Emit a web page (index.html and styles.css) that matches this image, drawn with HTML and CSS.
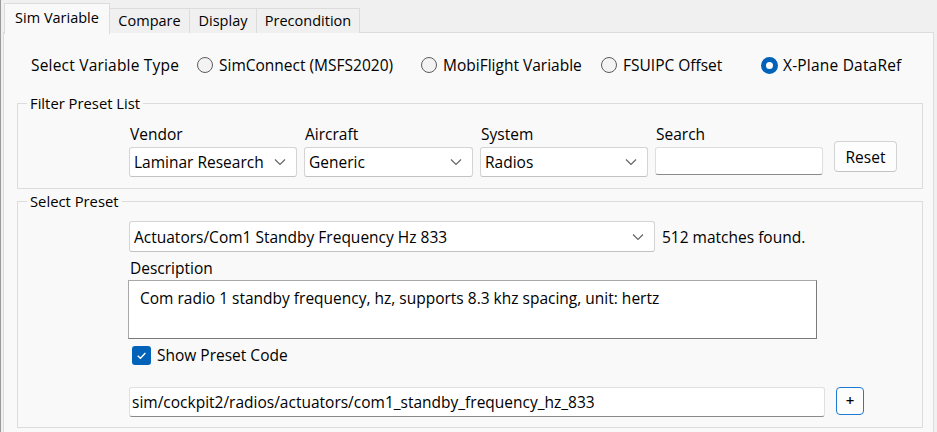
FILE: index.html
```html
<!DOCTYPE html>
<html>
<head>
<meta charset="utf-8">
<link rel="stylesheet" href="styles.css">
</head>
<body>
<div class="window">
  <div class="tabs">
    <div class="tab active t1">Sim Variable</div>
    <div class="tab t2">Compare</div>
    <div class="tab t3">Display</div>
    <div class="tab t4">Precondition</div>
  </div>
  <div class="panel">
    <div class="type-row">
      <span class="type-label">Select Variable Type</span>
      <label class="radio r1"><span class="dot"></span>SimConnect (MSFS2020)</label>
      <label class="radio r2"><span class="dot"></span>MobiFlight Variable</label>
      <label class="radio r3"><span class="dot"></span>FSUIPC Offset</label>
      <label class="radio sel"><span class="dot"></span>X-Plane DataRef</label>
    </div>

    <fieldset class="group filter">
      <legend>Filter Preset List</legend>
      <div class="filter-row">
        <div class="col">
          <div class="lbl">Vendor</div>
          <div class="combo w168"><span>Laminar Research</span><svg class="chev" viewBox="0 0 12 8"><path d="M1 1.5 L6 6.5 L11 1.5" /></svg></div>
        </div>
        <div class="col">
          <div class="lbl">Aircraft</div>
          <div class="combo w169"><span>Generic</span><svg class="chev" viewBox="0 0 12 8"><path d="M1 1.5 L6 6.5 L11 1.5" /></svg></div>
        </div>
        <div class="col">
          <div class="lbl">System</div>
          <div class="combo w168"><span>Radios</span><svg class="chev" viewBox="0 0 12 8"><path d="M1 1.5 L6 6.5 L11 1.5" /></svg></div>
        </div>
        <div class="col">
          <div class="lbl">Search</div>
          <div class="search"></div>
        </div>
        <div class="btn reset">Reset</div>
      </div>
    </fieldset>

    <fieldset class="group preset">
      <legend>Select Preset</legend>
      <div class="preset-body">
        <div class="preset-row">
          <div class="combo wide"><span>Actuators/Com1 Standby Frequency Hz 833</span><svg class="chev" viewBox="0 0 12 8"><path d="M1 1.5 L6 6.5 L11 1.5" /></svg></div>
          <span class="matches">512 matches found.</span>
        </div>
        <div class="lbl desc-lbl">Description</div>
        <div class="desc">Com radio 1 standby frequency, hz, supports 8.3 khz spacing, unit: hertz</div>
        <label class="check"><span class="box"><svg viewBox="0 0 12 12"><path d="M2.5 6.2 L5 8.6 L9.6 3.6" /></svg></span>Show Preset Code</label>
        <div class="code-row">
          <div class="code">sim/cockpit2/radios/actuators/com1_standby_frequency_hz_833</div>
          <div class="btn plus">+</div>
        </div>
      </div>
    </fieldset>
  </div>
</div>
</body>
</html>
```
FILE: styles.css
```css
* { box-sizing: border-box; }
html, body { margin: 0; padding: 0; }
body {
  width: 937px;
  height: 432px;
  overflow: hidden;
  background: #f0f0f0;
  font-family: "Open Sans", "Noto Sans", sans-serif;
  font-size: 15.5px;
  color: #000000;
  border-left: 1px solid #9a9a9a;
}
.window { padding-left: 2px; }
.tabs {
  display: flex;
  align-items: flex-end;
  height: 33px;
  padding-left: 2px;
  font-size: 14.5px;
}
.tab {
  height: 25px;
  background: #f0f0f0;
  border: 1px solid #dcdcdc;
  border-bottom: none;
  margin-left: -1px;
  line-height: 24px;
  white-space: nowrap;
  text-align: center;
}
.tab.active {
  background: #f9f9f9;
  line-height: 28px;
  position: relative;
  z-index: 1;
  margin-bottom: -1px;
  height: 31px;
}
.t1 { width: 106px; }
.t2 { width: 81px; }
.t3 { width: 68px; }
.t4 { width: 104px; }
.panel {
  width: 931px;
  height: 410px;
  margin-top: -1px;
  background: #f9f9f9;
  border: 1px solid #dcdcdc;
  padding: 22px 0 0 13px;
}
.type-row {
  display: flex;
  align-items: center;
  height: 20px;
  padding-left: 14px;
  white-space: nowrap;
}
.type-label { width: 166px; letter-spacing: 0.2px; }
.radio {
  display: flex;
  align-items: center;
}
.r1 { width: 224px; }
.r2 { width: 180px; }
.r3 { width: 160px; }
.radio .dot {
  width: 16px;
  height: 16px;
  border-radius: 50%;
  border: 1px solid #5c5c5c;
  background: #f3f3f3;
  margin-right: 6px;
  flex: none;
}
.radio.sel .dot {
  border: 5px solid #0063b9;
  background: #ffffff;
  width: 17px;
  height: 17px;
  margin-right: 5px;
}
.radio.sel { letter-spacing: 0.2px; }
.group {
  margin: 18px 0 0 0;
  width: 906px;
  border: 1px solid #dcdcdc;
  padding: 0;
  min-width: 0;
}
.group legend {
  margin-left: 9px;
  padding: 0 3px;
  line-height: 20px;
  height: 20px;
  font-size: 14.8px;
}
.filter-row {
  display: flex;
  align-items: flex-end;
  padding: 11px 0 11px 111px;
}
.col { display: flex; flex-direction: column; margin-right: 7px; }
.lbl { line-height: 20px; height: 20px; margin-bottom: 3px; padding-left: 1px; }
.combo {
  height: 30px;
  background: #ffffff;
  border: 1px solid #d4d4d4;
  border-bottom-color: #c2c2c2;
  border-radius: 3px;
  display: flex;
  align-items: center;
  justify-content: space-between;
  padding: 0 10px 0 4px;
  white-space: nowrap;
}
.w168 { width: 168px; }
.w169 { width: 169px; }
.chev { width: 12px; height: 8px; flex: none; }
.chev path { fill: none; stroke: #606060; stroke-width: 1.1; }
.search {
  width: 168px;
  height: 28px;
  background: #ffffff;
  border: 1px solid #dedede;
  border-bottom: 1px solid #8a8a8a;
  border-radius: 3px;
  margin-bottom: 2px;
}
.btn {
  background: #fdfdfd;
  border: 1px solid #d3d3d3;
  border-bottom-color: #c4c4c4;
  border-radius: 4px;
  display: flex;
  align-items: center;
  justify-content: center;
}
.reset {
  width: 63px;
  height: 31px;
  margin-left: 4px;
  margin-bottom: 5px;
}
.preset { margin-top: 2px; }
.preset-body { padding: 10px 0 10px 111px; }
.preset-row { display: flex; align-items: center; }
.wide { width: 526px; height: 31px; }
.matches { margin-left: 7px; }
.desc-lbl { margin-top: 6px; margin-bottom: 2px; }
.desc {
  width: 689px;
  height: 59px;
  margin-left: -1px;
  background: #ffffff;
  border: 1px solid #7a7a7a;
  border-top-color: #a8a8a8;
  border-left-color: #a8a8a8;
  padding: 7px 0 0 11px;
  line-height: 20px;
}
.check {
  display: flex;
  align-items: center;
  height: 20px;
  margin-top: 6px;
  padding-left: 3px;
}
.check .box {
  width: 19px;
  height: 19px;
  border-radius: 3px;
  background: #0063b9;
  margin-right: 6px;
  display: flex;
  align-items: center;
  justify-content: center;
}
.check .box svg { width: 13px; height: 13px; }
.check .box path { fill: none; stroke: #ffffff; stroke-width: 1.3; }
.code-row { display: flex; align-items: flex-start; margin-top: 22px; }
.code {
  width: 696px;
  height: 30px;
  background: #ffffff;
  border: 1px solid #e0e0e0;
  border-bottom: 1px solid #8a8a8a;
  border-radius: 3px;
  padding-left: 2px;
  line-height: 28px;
  white-space: nowrap;
}
.plus {
  width: 28px;
  height: 28px;
  margin-left: 11px;
  border: 1px solid #1f7ad6;
  font-size: 15px;
  font-weight: 600;
  line-height: 1;
  padding-bottom: 2px;
}
```
